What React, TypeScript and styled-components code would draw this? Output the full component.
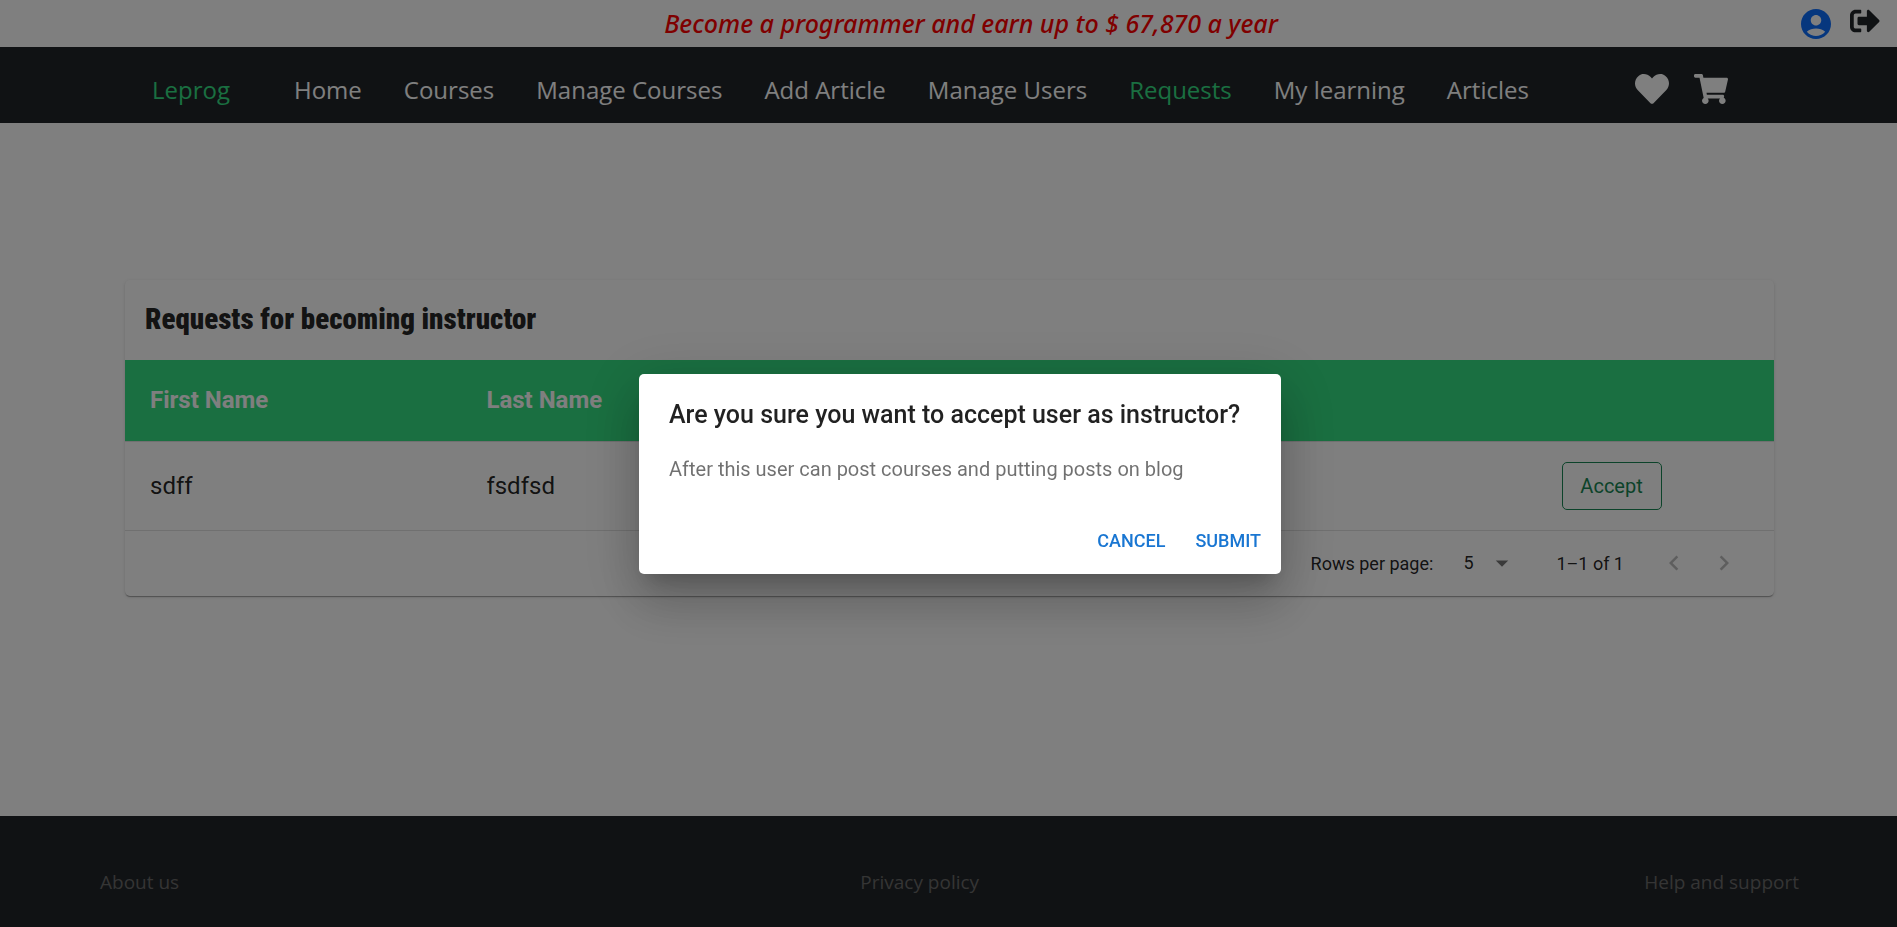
import React, { useState } from "react";
import styled, { createGlobalStyle } from "styled-components";
import { FaHeart, FaShoppingCart, FaSignOutAlt } from "react-icons/fa";
import { MdArrowDropDown, MdChevronLeft, MdChevronRight } from "react-icons/md";

const segoe = `"Open Sans", "Noto Sans", sans-serif`;
const roboto = `Roboto, "Liberation Sans", sans-serif`;
const green = "#34de82";
const dark = "#212529";

const GlobalStyle = createGlobalStyle`
  *, *::before, *::after { box-sizing: border-box; }
  body {
    margin: 0;
    background: #fff;
    color: ${dark};
    font-family: ${segoe};
  }
  a { text-decoration: none; }
  button { font: inherit; cursor: pointer; }
`;

const Page = styled.div`
  display: flex;
  flex-direction: column;
  min-height: 100vh;
`;

const TopBar = styled.header`
  display: flex;
  align-items: flex-start;
  height: 47px;
  padding: 6px 17px 0 144px;
`;

const Banner = styled.p`
  flex: 1;
  margin: 0;
  color: #f00;
  font-family: "Noto Sans", sans-serif;
  font-size: 25px;
  font-style: italic;
  font-weight: 500;
  line-height: 34px;
  text-align: center;
`;

const TopActions = styled.div`
  display: flex;
  gap: 16px;
`;

const IconButton = styled.button<{ $color: string; $size: number }>`
  display: flex;
  padding: 0;
  border: 0;
  background: none;
  color: ${(p) => p.$color};

  svg {
    width: ${(p) => p.$size}px;
    height: ${(p) => p.$size}px;
  }
`;

const NavBar = styled.nav`
  display: flex;
  align-items: center;
  height: 76px;
  padding: 10px 169px 0 152px;
  background: ${dark};
  font-size: 24px;
  line-height: 36px;
  white-space: nowrap;
`;

const Brand = styled.a`
  margin-right: 64px;
  color: ${green};
`;

const NavList = styled.ul`
  display: flex;
  gap: 42px;
  margin: 0;
  padding: 0;
  list-style: none;
`;

const NavLink = styled.a<{ $active: boolean }>`
  color: ${(p) => (p.$active ? green : "#fff")};
`;

const NavIcons = styled.div`
  display: flex;
  gap: 25px;
  margin-left: auto;
  padding-bottom: 2px;
`;

const Main = styled.main`
  flex: 1;
  padding: 157px 123px 0 125px;
`;

const Card = styled.section`
  border-radius: 5px;
  background: #fff;
  box-shadow: 0 2px 1px -1px rgba(0, 0, 0, 0.2), 0 1px 1px 0 rgba(0, 0, 0, 0.14),
    0 1px 4px 0 rgba(0, 0, 0, 0.12);
  color: rgba(0, 0, 0, 0.87);
  font-family: ${roboto};
`;

const CardTitle = styled.h1`
  margin: 0;
  padding: 0 20px 2px;
  font-family: "Roboto Condensed", Impact, sans-serif;
  font-size: 29px;
  font-weight: 900;
  line-height: 78px;
`;

const Table = styled.table`
  width: 100%;
  border-collapse: collapse;
  table-layout: fixed;
  font-size: 24px;
  text-align: left;

  th, td {
    padding: 20px 25px;
    border-bottom: 1px solid #e0e0e0;
  }

  thead tr {
    height: 81px;
    background: ${green};
    color: #fff;
  }
`;

const NameCol = styled.col`
  width: 20.4%;
`;

const ActionCol = styled.col`
  width: 14.4%;
`;

const AcceptButton = styled.button`
  display: block;
  width: 100px;
  height: 48px;
  padding: 0;
  border: 1px solid #198754;
  border-radius: 5px;
  background: none;
  color: #198754;
  font-size: 20px;
`;

const Pagination = styled.div`
  display: flex;
  align-items: center;
  justify-content: flex-end;
  height: 65px;
  padding-right: 25px;
  font-size: 18px;
`;

const SelectBox = styled.span`
  position: relative;
  display: flex;
  margin: 0 39px 0 10px;

  svg {
    position: absolute;
    top: 0;
    right: 0;
    width: 30px;
    height: 30px;
    color: rgba(0, 0, 0, 0.54);
    pointer-events: none;
  }
`;

const RowsSelect = styled.select`
  width: 74px;
  height: 30px;
  padding: 0 0 2px 20px;
  border: 0;
  background: none;
  appearance: none;
  color: inherit;
  font: inherit;
`;

const RangeText = styled.span`
  margin-right: 25px;
`;

const PageButton = styled.button`
  display: flex;
  padding: 10px;
  border: 0;
  background: none;
  color: rgba(0, 0, 0, 0.26);

  svg {
    width: 30px;
    height: 30px;
  }
`;

const Footer = styled.footer`
  display: flex;
  justify-content: space-between;
  padding: 52px 98px 30px 100px;
  background: ${dark};
  font-size: 19px;
  line-height: 29px;
`;

const FooterLink = styled.a`
  color: #6a6a6a;

  &:first-child {
    margin-right: 16px;
  }
`;

const Backdrop = styled.div`
  position: fixed;
  inset: 0;
  display: flex;
  align-items: center;
  justify-content: center;
  padding: 21px 0 0 23px;
  background: rgba(0, 0, 0, 0.5);
`;

const Dialog = styled.div`
  width: 642px;
  border-radius: 5px;
  background: #fff;
  box-shadow: 0 14px 19px -9px rgba(0, 0, 0, 0.2), 0 30px 48px 4px rgba(0, 0, 0, 0.14),
    0 11px 58px 10px rgba(0, 0, 0, 0.12);
  font-family: ${roboto};
`;

const DialogTitle = styled.h2`
  margin: 0;
  padding: 21px 30px 19px;
  color: rgba(0, 0, 0, 0.87);
  font-size: 25px;
  font-weight: 500;
  line-height: 40px;
`;

const DialogText = styled.p`
  margin: 0;
  padding: 0 30px 24px;
  color: rgba(0, 0, 0, 0.56);
  font-size: 20px;
  line-height: 30px;
`;

const DialogActions = styled.div`
  display: flex;
  justify-content: flex-end;
  gap: 10px;
  padding: 10px 10px 11px;
`;

const DialogButton = styled.button`
  padding: 7px 10px;
  border: 0;
  background: none;
  color: #1976d2;
  font-size: 18px;
  font-weight: 500;
  line-height: 31px;
  text-transform: uppercase;
`;

const links = [
  "Home",
  "Courses",
  "Manage Courses",
  "Add Article",
  "Manage Users",
  "Requests",
  "My learning",
  "Articles",
];

const requests = [{ first: "sdff", last: "fsdfsd" }];

const AccountIcon = () => (
  <svg viewBox="0 0 24 24" fill="currentColor" aria-hidden="true">
    <path d="M12 2C6.48 2 2 6.48 2 12s4.48 10 10 10 10-4.48 10-10S17.52 2 12 2zm0 4c1.93 0 3.5 1.57 3.5 3.5S13.93 13 12 13s-3.5-1.57-3.5-3.5S10.07 6 12 6zm0 14c-2.03 0-4.43-.82-6.14-2.88C7.55 15.8 9.68 15 12 15s4.45.8 6.14 2.12C16.43 19.18 14.03 20 12 20z" />
  </svg>
);

export default function App() {
  const [open, setOpen] = useState(true);

  return (
    <>
      <GlobalStyle />
      <Page>
        <TopBar>
          <Banner>Become a programmer and earn up to $ 67,870 a year</Banner>
          <TopActions>
            <IconButton $color="#0d6efd" $size={36} aria-label="Profile">
              <AccountIcon />
            </IconButton>
            <IconButton $color={dark} $size={30} aria-label="Log out">
              <FaSignOutAlt />
            </IconButton>
          </TopActions>
        </TopBar>

        <NavBar>
          <Brand href="#">Leprog</Brand>
          <NavList>
            {links.map((label) => (
              <li key={label}>
                <NavLink href="#" $active={label === "Requests"}>
                  {label}
                </NavLink>
              </li>
            ))}
          </NavList>
          <NavIcons>
            <IconButton $color="#fff" $size={34} aria-label="Wishlist">
              <FaHeart />
            </IconButton>
            <IconButton $color="#fff" $size={34} aria-label="Cart">
              <FaShoppingCart />
            </IconButton>
          </NavIcons>
        </NavBar>

        <Main>
          <Card>
            <CardTitle>Requests for becoming instructor</CardTitle>
            <Table>
              <colgroup>
                <NameCol />
                <col />
                <ActionCol />
              </colgroup>
              <thead>
                <tr>
                  <th scope="col">First Name</th>
                  <th scope="col">Last Name</th>
                  <td />
                </tr>
              </thead>
              <tbody>
                {requests.map((r) => (
                  <tr key={r.first}>
                    <td>{r.first}</td>
                    <td>{r.last}</td>
                    <td>
                      <AcceptButton onClick={() => setOpen(true)}>Accept</AcceptButton>
                    </td>
                  </tr>
                ))}
              </tbody>
            </Table>
            <Pagination>
              <label htmlFor="rows">Rows per page:</label>
              <SelectBox>
                <RowsSelect id="rows" defaultValue="5">
                  <option>5</option>
                  <option>10</option>
                  <option>25</option>
                </RowsSelect>
                <MdArrowDropDown />
              </SelectBox>
              <RangeText>1–1 of 1</RangeText>
              <PageButton disabled aria-label="Previous page">
                <MdChevronLeft />
              </PageButton>
              <PageButton disabled aria-label="Next page">
                <MdChevronRight />
              </PageButton>
            </Pagination>
          </Card>
        </Main>

        <Footer>
          <FooterLink href="#">About us</FooterLink>
          <FooterLink href="#">Privacy policy</FooterLink>
          <FooterLink href="#">Help and support</FooterLink>
        </Footer>
      </Page>

      {open && (
        <Backdrop>
          <Dialog role="dialog" aria-modal="true" aria-labelledby="dialog-title">
            <DialogTitle id="dialog-title">
              Are you sure you want to accept user as instructor?
            </DialogTitle>
            <DialogText>After this user can post courses and putting posts on blog</DialogText>
            <DialogActions>
              <DialogButton onClick={() => setOpen(false)}>Cancel</DialogButton>
              <DialogButton onClick={() => setOpen(false)}>Submit</DialogButton>
            </DialogActions>
          </Dialog>
        </Backdrop>
      )}
    </>
  );
}
